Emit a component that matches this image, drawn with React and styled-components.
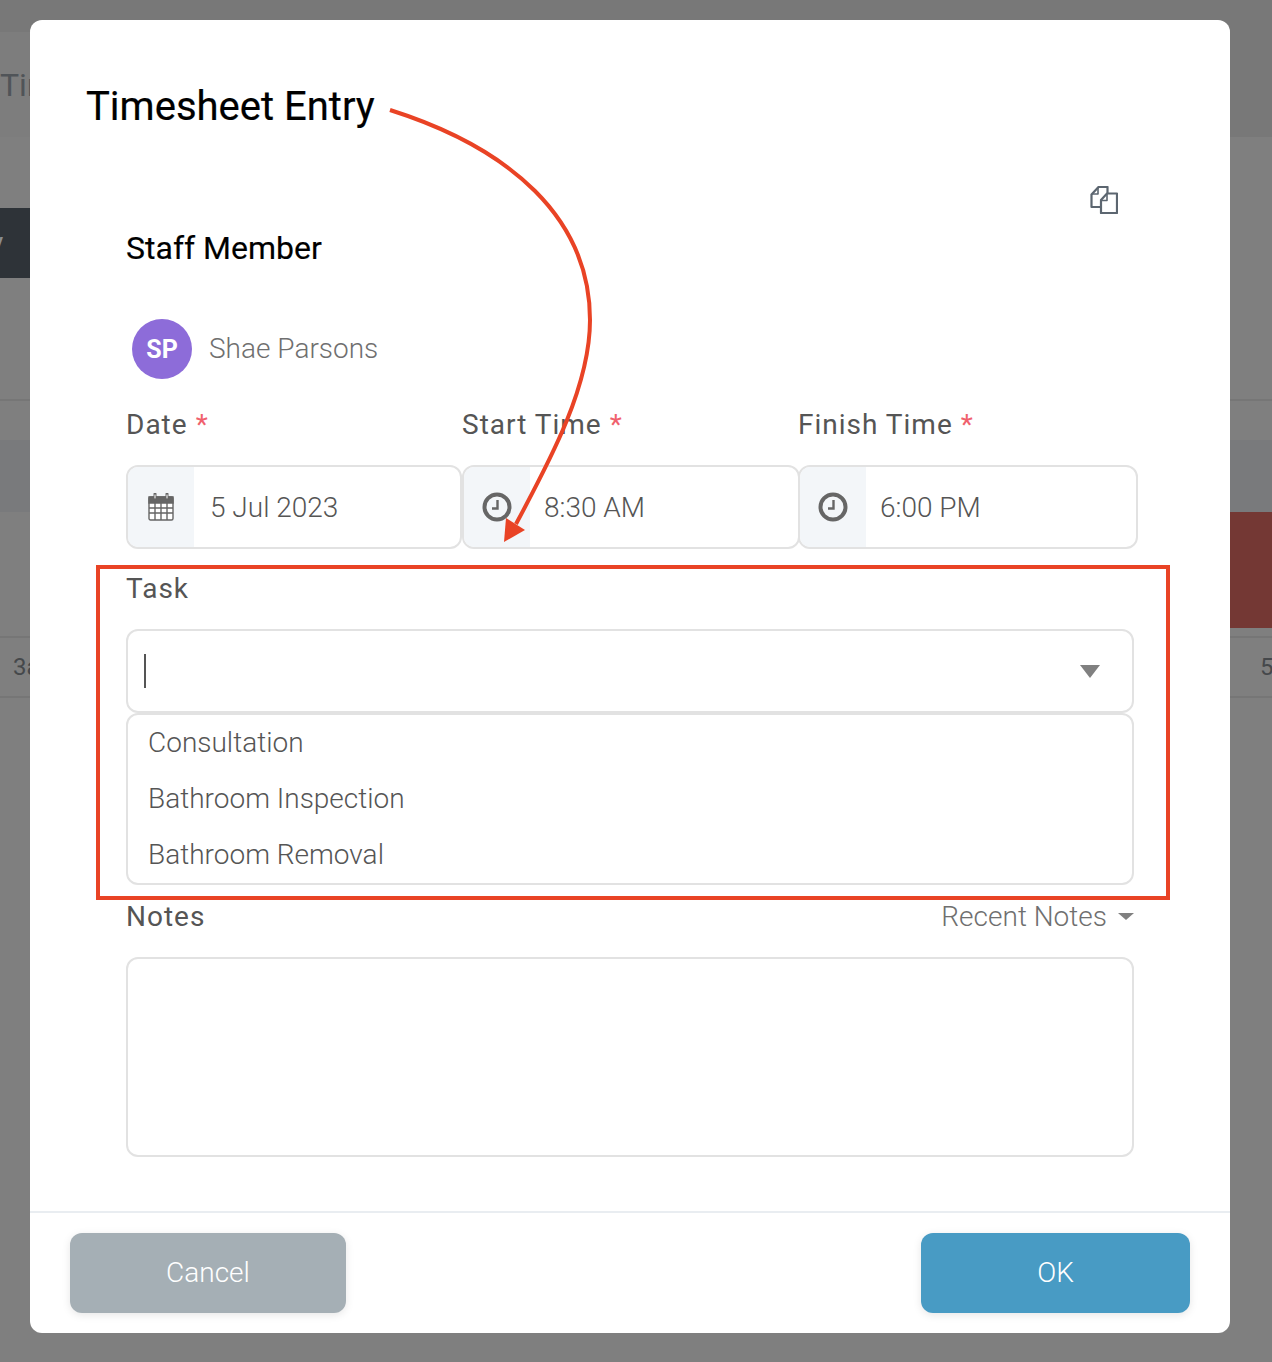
import React from "react";
import styled, { createGlobalStyle } from "styled-components";

const GlobalStyle = createGlobalStyle`
  html, body { margin: 0; padding: 0; }
  body { font-family: Roboto, "Liberation Sans", sans-serif; background: #7f7f7f; }
  * { box-sizing: border-box; }
`;

const Page = styled.div`
  position: relative;
  width: 1272px;
  height: 1362px;
  overflow: hidden;
  background: #7f7f7f;
`;

/* dimmed page behind the modal */
const Top = styled.div`
  display: grid;
  grid-template-columns: 30px 1fr;
  height: 137px;
  background: #787878;
`;

const TopLeft = styled.div`
  margin-top: 32px;
  background: #7d7d7d;
  overflow: hidden;
  white-space: nowrap;
  color: #505458;
  font-size: 32px;
  line-height: 106px;
`;

const DarkTab = styled.div`
  width: 30px;
  height: 70px;
  margin-top: 71px;
  background: #2e3338;
  color: #8a8d90;
  font-size: 28px;
  line-height: 70px;
  text-indent: -10px;
  overflow: hidden;
`;

const Rule = styled.div`
  height: 2px;
  margin-top: ${(p) => p.$top}px;
  background: #767676;
`;

const Band = styled.div`
  height: 72px;
  margin-top: 39px;
  background: #797a7c;
`;

const RedBlock = styled.div`
  height: 116px;
  margin-left: auto;
  width: 42px;
  background: #743834;
`;

const TimeRow = styled.div`
  display: flex;
  justify-content: space-between;
  height: 58px;
  padding: 0 0 0 13px;
  color: #45484b;
  font-size: 24px;
  line-height: 58px;
  overflow: hidden;
  white-space: nowrap;
  & > span:last-child { margin-right: -36px; }
`;

const Modal = styled.div`
  position: absolute;
  top: 20px;
  left: 30px;
  width: 1200px;
  height: 1313px;
  display: flex;
  flex-direction: column;
  background: #fff;
  border-radius: 12px;
`;

const Title = styled.h1`
  margin: 64px 0 0 56px;
  font-size: 40px;
  line-height: 46px;
  font-weight: 400;
  color: #000;
  -webkit-text-stroke: 0.2px #000;
`;

const Body = styled.div`
  padding: 0 92px 0 96px;
`;

const Toolbar = styled.div`
  display: flex;
  justify-content: flex-end;
  padding-right: 20px;
  margin-top: 56px;
  height: 28px;
`;

const SectionTitle = styled.h2`
  margin: 15px 0 0;
  font-size: 32px;
  line-height: 38px;
  font-weight: 400;
  color: #000;
  -webkit-text-stroke: 0.15px #000;
`;

const StaffRow = styled.div`
  display: flex;
  align-items: center;
  gap: 17px;
  margin-top: 52px;
  padding-left: 6px;
`;

const Avatar = styled.div`
  width: 60px;
  height: 60px;
  border-radius: 50%;
  background: #8d6cd9;
  color: #fff;
  font-size: 25px;
  font-weight: 700;
  display: flex;
  align-items: center;
  justify-content: center;
`;

const StaffName = styled.span`
  font-size: 28px;
  line-height: 32px;
  font-weight: 300;
  color: #6f6f6f;
`;

const FieldGrid = styled.div`
  display: grid;
  grid-template-columns: 336px 336px 340px;
  margin-top: 30px;
`;

const Label = styled.label`
  display: block;
  font-size: 28px;
  line-height: 32px;
  font-weight: 400;
  letter-spacing: 1px;
  color: #555;
  margin-top: ${(p) => p.$top || 0}px;
`;

const Required = styled.span`
  color: #f0616d;
  margin-left: 8px;
`;

const InputGroup = styled.div`
  display: flex;
  height: 84px;
  margin-top: 24px;
  margin-right: ${(p) => (p.$wide ? -2 : 0)}px;
  border: 2px solid #e2e2e2;
  border-radius: 12px;
  overflow: hidden;
  background: #fff;
`;

const Addon = styled.div`
  width: 66px;
  flex: none;
  display: flex;
  align-items: center;
  justify-content: center;
  background: #f3f6f9;
`;

const InputText = styled.div`
  padding-left: ${(p) => p.$pad}px;
  font-size: 28px;
  font-weight: 300;
  line-height: 82px;
  color: #555;
`;

const TaskColumn = styled.div`
  width: 1008px;
`;

const Select = styled.div`
  display: flex;
  align-items: center;
  justify-content: space-between;
  height: 84px;
  margin-top: 24px;
  padding: 0 32px 0 16px;
  border: 2px solid #e2e2e2;
  border-radius: 12px;
`;

const Caret = styled.div`
  width: 2px;
  height: 34px;
  background: #555;
`;

const Triangle = styled.div`
  width: 0;
  height: 0;
  border-left: ${(p) => p.$size}px solid transparent;
  border-right: ${(p) => p.$size}px solid transparent;
  border-top: ${(p) => p.$height}px solid #808080;
`;

const Options = styled.div`
  border: 2px solid #e2e2e2;
  border-radius: 12px;
`;

const Option = styled.div`
  height: 56px;
  padding-left: 20px;
  font-size: 28px;
  font-weight: 300;
  line-height: 56px;
  color: #555;
`;

const NotesHead = styled.div`
  display: flex;
  align-items: center;
  justify-content: space-between;
  margin-top: 15px;
`;

const RecentNotes = styled.div`
  display: flex;
  align-items: center;
  gap: 11px;
  font-size: 28px;
  font-weight: 300;
  color: #6f6f6f;
`;

const NotesBox = styled.div`
  height: 200px;
  margin-top: 24px;
  border: 2px solid #e2e2e2;
  border-radius: 12px;
`;

const Footer = styled.div`
  display: flex;
  justify-content: space-between;
  margin-top: auto;
  padding: 20px 40px;
  border-top: 2px solid #e9edf1;
`;

const Button = styled.button`
  width: ${(p) => p.$width}px;
  height: 80px;
  padding: 0 0 2px;
  border: 0;
  border-radius: 12px;
  background: ${(p) => p.$color};
  box-shadow: 0 2px 8px rgba(0, 0, 0, 0.1);
  color: #fff;
  font-family: inherit;
  font-size: 28px;
  font-weight: 300;
`;

const Highlight = styled.div`
  position: absolute;
  left: 96px;
  top: 565px;
  width: 1074px;
  height: 335px;
  border: 4px solid #e94325;
`;

const Arrow = styled.svg`
  position: absolute;
  left: 0;
  top: 0;
  pointer-events: none;
`;

const CopyIcon = () => (
  <svg width="28" height="28" viewBox="0 0 28 28" fill="none" stroke="#5c6670" strokeWidth="2.2" strokeLinejoin="round">
    <path d="M10.5 21H1.5V8.5L8.5 1H17.5V7" />
    <path d="M8 1.5V8H2" strokeWidth="1.6" />
    <path d="M17 7.5H27V27H11V14Z" fill="#fff" />
    <path d="M17 8V14.5H11" strokeWidth="1.6" />
  </svg>
);

const CalendarIcon = () => (
  <svg width="26" height="28" viewBox="0 0 26 28" fill="none" stroke="#666" strokeWidth="1.4">
    <rect x="1" y="4" width="24" height="23" rx="1.5" fill="#fff" />
    <path d="M1 4H25V10H1Z" fill="#666" />
    <path d="M1 15H25M1 20H25M7 10V27M13 10V27M19 10V27" />
    <path d="M7 1V6M19 1V6" stroke="#666" strokeWidth="3" strokeLinecap="round" />
    <path d="M7 2V5M19 2V5" stroke="#fff" strokeWidth="1" strokeLinecap="round" />
  </svg>
);

const ClockIcon = () => (
  <svg width="30" height="30" viewBox="0 0 30 30" fill="none" stroke="#666">
    <circle cx="15" cy="15" r="12.5" strokeWidth="4" />
    <path d="M15.5 8V16.5H10" strokeWidth="2.4" />
  </svg>
);

const DateField = ({ label, icon, value, pad, wide }) => (
  <div>
    <Label>{label}<Required>*</Required></Label>
    <InputGroup $wide={wide}>
      <Addon>{icon}</Addon>
      <InputText $pad={pad}>{value}</InputText>
    </InputGroup>
  </div>
);

const tasks = ["Consultation", "Bathroom Inspection", "Bathroom Removal"];

const App = () => (
  <Page>
    <GlobalStyle />
    <Top>
      <TopLeft>Timesheets</TopLeft>
      <div />
    </Top>
    <DarkTab>y</DarkTab>
    <Rule $top={121} />
    <Band />
    <RedBlock />
    <Rule $top={8} />
    <TimeRow><span>3am</span><span>5pm</span></TimeRow>
    <Rule $top={0} />

    <Modal>
      <Title>Timesheet Entry</Title>
      <Body>
        <Toolbar><CopyIcon /></Toolbar>
        <SectionTitle>Staff Member</SectionTitle>
        <StaffRow>
          <Avatar>SP</Avatar>
          <StaffName>Shae Parsons</StaffName>
        </StaffRow>
        <FieldGrid>
          <DateField label="Date" icon={<CalendarIcon />} value="5 Jul 2023" pad={16} />
          <DateField label="Start Time" icon={<ClockIcon />} value="8:30 AM" pad={14} wide />
          <DateField label="Finish Time" icon={<ClockIcon />} value="6:00 PM" pad={14} />
        </FieldGrid>
        <TaskColumn>
          <Label $top={24}>Task</Label>
          <Select>
            <Caret />
            <Triangle $size={10} $height={13} />
          </Select>
          <Options>
            {tasks.map((t) => <Option key={t}>{t}</Option>)}
          </Options>
          <NotesHead>
            <Label>Notes</Label>
            <RecentNotes>Recent Notes <Triangle $size={8} $height={7} /></RecentNotes>
          </NotesHead>
          <NotesBox />
        </TaskColumn>
      </Body>
      <Footer>
        <Button $width={276} $color="#a5afb5">Cancel</Button>
        <Button $width={269} $color="#489bc4">OK</Button>
      </Footer>
    </Modal>

    <Highlight />
    <Arrow width="1272" height="1362" viewBox="0 0 1272 1362" fill="none">
      <path d="M390 110C510 148 590 218 590 320C590 388 548 464 516 524" stroke="#e94325" strokeWidth="4" />
      <path d="M504 542L506 518L525 530Z" fill="#e94325" />
    </Arrow>
  </Page>
);

export default App;
